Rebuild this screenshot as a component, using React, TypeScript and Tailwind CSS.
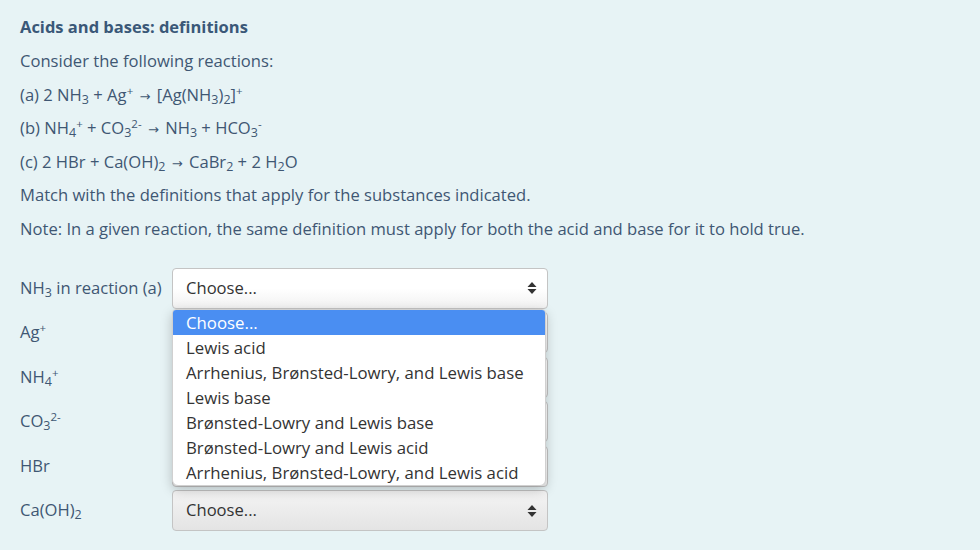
import React from "react";

const options = [
  "Choose...",
  "Lewis acid",
  "Arrhenius, Brønsted-Lowry, and Lewis base",
  "Lewis base",
  "Brønsted-Lowry and Lewis base",
  "Brønsted-Lowry and Lewis acid",
  "Arrhenius, Brønsted-Lowry, and Lewis acid",
];

const Sub = ({ children }: { children: React.ReactNode }) => (
  <sub className="text-[12.5px] leading-none">{children}</sub>
);
const Sup = ({ children }: { children: React.ReactNode }) => (
  <sup className="text-[11.5px] leading-none">{children}</sup>
);
const Arrow = () => (
  <span className="text-[13px] leading-none px-[2px]" style={{ fontFamily: '"DejaVu Sans", sans-serif' }}>
    →
  </span>
);

const Arrows = () => (
  <svg width="10" height="14" viewBox="0 0 10 14" className="shrink-0">
    <path d="M5 1 L9.5 6 H0.5 Z" fill="#333" />
    <path d="M5 13 L9.5 8 H0.5 Z" fill="#333" />
  </svg>
);

// selects hidden behind the open list keep their box only
const Select = ({ grey, hidden }: { grey?: boolean; hidden?: boolean }) => (
  <div
    className={`w-[376px] h-[41px] rounded-[4px] border border-[#c4c4c4] flex items-center justify-between pl-[13px] pr-[10px] text-[#333] ${
      grey ? "bg-gradient-to-b from-[#f4f4f4] to-[#e4e4e4]" : "bg-gradient-to-b from-white via-white to-[#f1f1f1]"
    }`}
  >
    {!hidden && (
      <>
        <span>Choose...</span>
        <Arrows />
      </>
    )}
  </div>
);

const rows: React.ReactNode[] = [
  <>NH<Sub>3</Sub> in reaction (a)</>,
  <>Ag<Sup>+</Sup></>,
  <>NH<Sub>4</Sub><Sup>+</Sup></>,
  <>CO<Sub>3</Sub><Sup>2-</Sup></>,
  <>HBr</>,
  <>Ca(OH)<Sub>2</Sub></>,
];

export default function App() {
  return (
    <div
      className="w-[980px] h-[550px] bg-[#e7f3f5] text-[#3f5773] px-5 pt-[14px] overflow-hidden"
      style={{ fontFamily: '"Open Sans", "Noto Sans", sans-serif' }}
    >
      <h3 className="text-[16.5px] font-bold text-[#3a5878] leading-[26px]">Acids and bases: definitions</h3>
      <div className="text-[16.6px] leading-[27px] flex flex-col gap-[6.5px] mt-[7px]">
        <p className="h-[27px]">Consider the following reactions:</p>
        <p className="h-[27px]">
          (a) 2 NH<Sub>3</Sub> + Ag<Sup>+</Sup> <Arrow /> [Ag(NH<Sub>3</Sub>)<Sub>2</Sub>]<Sup>+</Sup>
        </p>
        <p className="h-[27px]">
          (b) NH<Sub>4</Sub><Sup>+</Sup> + CO<Sub>3</Sub><Sup>2-</Sup> <Arrow /> NH<Sub>3</Sub> + HCO<Sub>3</Sub>
          <Sup>-</Sup>
        </p>
        <p className="h-[27px]">
          (c) 2 HBr + Ca(OH)<Sub>2</Sub> <Arrow /> CaBr<Sub>2</Sub> + 2 H<Sub>2</Sub>O
        </p>
        <p className="h-[27px]">Match with the definitions that apply for the substances indicated.</p>
        <p className="h-[27px]">Note: In a given reaction, the same definition must apply for both the acid and base for it to hold true.</p>
      </div>

      <div className="relative mt-[26px]">
        <div className="grid grid-cols-[152px_auto] gap-y-[3.5px] text-[16.6px]">
          {rows.map((label, i) => (
            <React.Fragment key={i}>
              <div className="h-[41px] flex items-center">
                <span>{label}</span>
              </div>
              <Select grey={i === 5} hidden={i > 0 && i < 5} />
            </React.Fragment>
          ))}
        </div>

        <div className="absolute left-[152px] top-[41px] w-[374px] bg-white rounded-b-[6px] rounded-t-[4px] shadow-[0_4px_12px_rgba(0,0,0,0.22)] border border-[#d0d0d0] overflow-hidden text-[16.8px] text-[#333]">
          {options.map((o, i) => (
            <div
              key={o}
              className={`h-[25px] leading-[25px] pl-[13px] ${i === 0 ? "bg-[#4a8ef2] text-white" : ""}`}
            >
              {o}
            </div>
          ))}
        </div>
      </div>
    </div>
  );
}
